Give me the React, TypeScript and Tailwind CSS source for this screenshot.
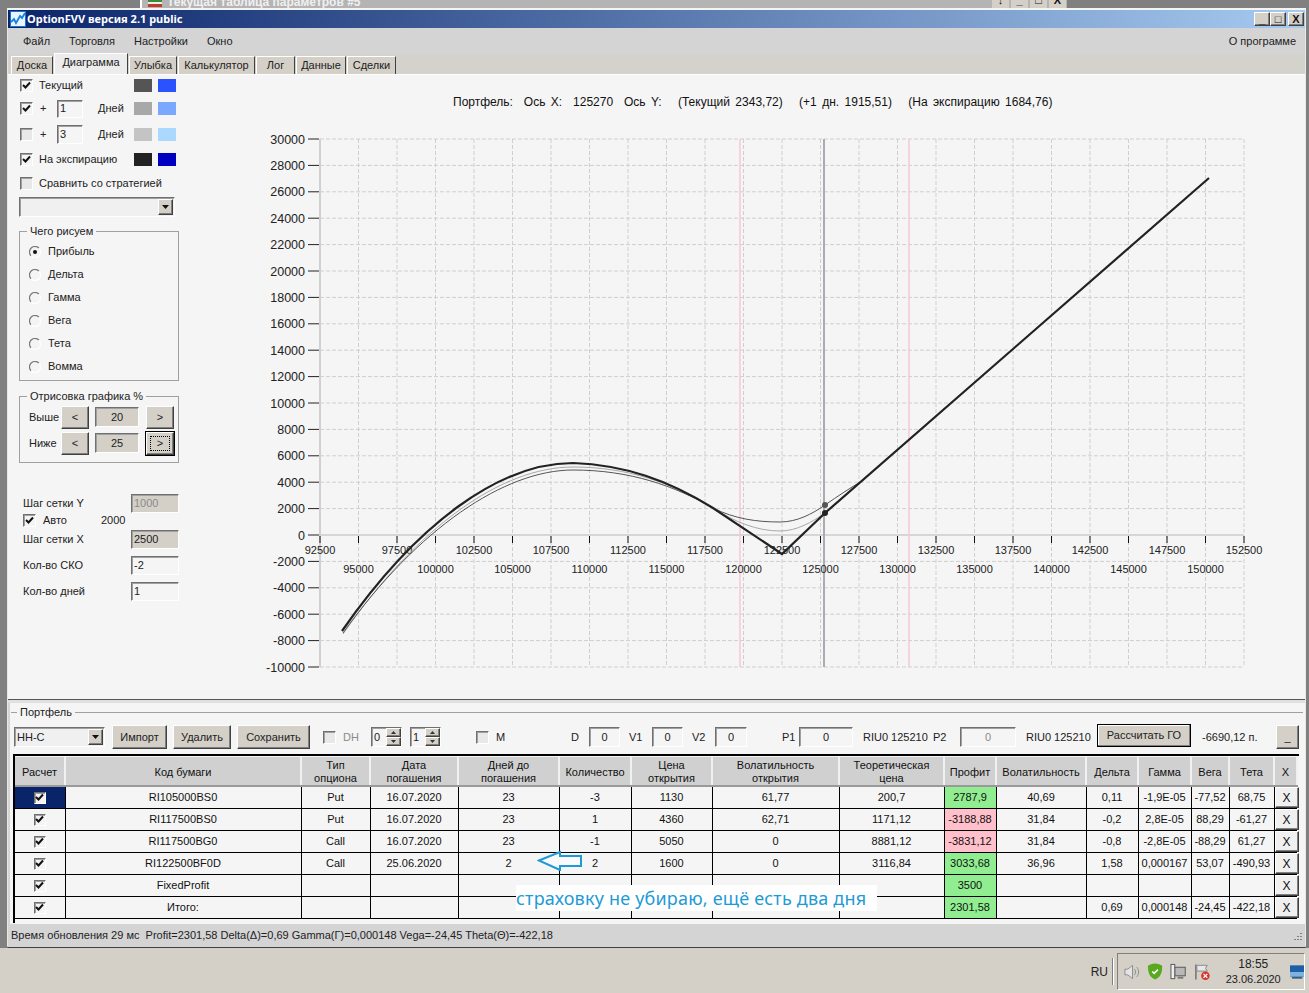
import React from "react";

const raised = "border border-t-white border-l-white border-r-[#404040] border-b-[#404040] bg-[#d4d0c8] shadow-[inset_-1px_-1px_0_#808080]";
const sunken = "border border-t-[#707070] border-l-[#707070] border-r-white border-b-white shadow-[inset_1px_1px_0_#a0a0a0]";

function Check({ on = true, size = 13, off = false }: { on?: boolean; size?: number; off?: boolean }) {
  return (
    <span className={`flex shrink-0 items-center justify-center ${sunken} ${off ? "bg-[#e8e8e8]" : "bg-[#f4f4f4]"}`} style={{ width: size, height: size }}>
      {on && (
        <svg width="9" height="9" viewBox="0 0 9 9">
          <path d="M1 4l2.5 2.5L8 1.5" fill="none" stroke="#111" strokeWidth="2" />
        </svg>
      )}
    </span>
  );
}

function Radio({ on = false }: { on?: boolean }) {
  return (
    <svg width="12" height="12" viewBox="0 0 12 12" className="shrink-0">
      <circle cx="6" cy="6" r="5.3" fill="#f4f4f4" />
      <path d="M10 2.2A5.3 5.3 0 0 0 2 9.8" fill="none" stroke="#777" strokeWidth="1.2" />
      <path d="M2 9.8A5.3 5.3 0 0 0 10 2.2" fill="none" stroke="#fff" strokeWidth="1.2" />
      {on && <circle cx="6" cy="6" r="2" fill="#111" />}
    </svg>
  );
}

function Field({ v, className = "" }: { v: string; className?: string }) {
  return <span className={`flex items-center ${sunken} ${className}`}>{v}</span>;
}

function Swatch({ c }: { c: string }) {
  return <span className={`h-[13px] w-[18px] shrink-0 ${c}`} />;
}

function Combo({ v = "", className = "" }: { v?: string; className?: string }) {
  return (
    <span className={`flex items-center justify-between bg-[#f0f0f0] pl-[2px] pr-[1px] ${sunken} ${className}`}>
      <span>{v}</span>
      <span className={`flex h-[16px] w-[15px] items-center justify-center ${raised}`}>
        <svg width="7" height="4" viewBox="0 0 7 4"><path d="M0 0h7L3.5 4z" fill="#111" /></svg>
      </span>
    </span>
  );
}

function Spin({ v }: { v: string }) {
  return (
    <span className={`flex h-[20px] w-[31px] items-center justify-between pl-[2px] ${sunken}`}>
      <span>{v}</span>
      <span className="flex h-full w-[15px] flex-col">
        <span className={`flex h-1/2 items-center justify-center ${raised}`}><svg width="5" height="3" viewBox="0 0 5 3"><path d="M0 3h5L2.5 0z" fill="#333" /></svg></span>
        <span className={`flex h-1/2 items-center justify-center ${raised}`}><svg width="5" height="3" viewBox="0 0 5 3"><path d="M0 0h5L2.5 3z" fill="#333" /></svg></span>
      </span>
    </span>
  );
}

function Chart() {
  const xs: number[] = [];
  for (let i = 0; i <= 24; i++) xs.push(320 + i * 38.5);
  const ys: number[] = [];
  for (let i = 0; i <= 20; i++) ys.push(139 + i * 26.4);
  const font = { fontFamily: "'Liberation Sans', Arial, sans-serif" };
  return (
    <svg width="1040" height="625" viewBox="262 75 1040 625" className="shrink-0" style={font}>
      <text x="453" y="106" fontSize="12" fill="#111" wordSpacing="2.1" xmlSpace="preserve">
        Портфель:  Ось X:  125270  Ось Y:   (Текущий 2343,72)   (+1 дн. 1915,51)   (На экспирацию 1684,76)
      </text>
      {xs.slice(1).map((x) => (
        <line key={x} x1={x} x2={x} y1="139" y2="667" stroke="#cfcfcf" strokeDasharray="4 2" />
      ))}
      {ys.map((y) => (
        <line key={y} x1="320" x2="1244" y1={y} y2={y} stroke="#cfcfcf" strokeDasharray="4 2" />
      ))}
      <line x1="320" x2="320" y1="139" y2="667" stroke="#d0d0d0" strokeWidth="2" />
      <line x1="320" x2="1244" y1="535" y2="535" stroke="#d6d6d6" strokeWidth="2" />
      <line x1="740" x2="740" y1="139" y2="667" stroke="#f5c6d2" strokeWidth="1.4" />
      <line x1="909" x2="909" y1="139" y2="667" stroke="#f5c6d2" strokeWidth="1.4" />
      <line x1="824" x2="824" y1="139" y2="667" stroke="#a9acb0" strokeWidth="2" />
      {ys.map((y, i) => (
        <g key={y}>
          <line x1="308" x2="319" y1={y} y2={y} stroke="#222" strokeWidth="1" />
          <text x="305" y={y + 4.5} fontSize="12.5" textAnchor="end" fill="#222">{30000 - i * 2000}</text>
        </g>
      ))}
      {xs.map((x) => (
        <line key={x} x1={x} x2={x} y1="536" y2="543" stroke="#111" />
      ))}
      {xs.map((x, i) => (
        <text key={x} x={x} y={i % 2 === 0 ? 554 : 573} fontSize="11" textAnchor="middle" fill="#222">{92500 + i * 2500}</text>
      ))}
      <path d="M343 634C418 526 502 467 573 467C628 467 672 483 713 508C735 522 757 531 780 531C797 531 812 522 825 513C838 503 850 491 862 481" fill="none" stroke="#a8a8a8" strokeWidth="1" />
      <path d="M343 633C418 528 505 470 573 470C630 470 675 486 713 508C735 519 757 522 780 522C797 522 812 514 825 505C838 496 850 488 862 481" fill="none" stroke="#555" strokeWidth="1" />
      <path d="M342 631C417 523 500 463 573 463C625 465 668 480 713 508L782 554L825 513L1209 178" fill="none" stroke="#222" strokeWidth="2.2" />
      <circle cx="825" cy="505" r="3" fill="#555" />
      <circle cx="825" cy="513" r="3" fill="#222" />
    </svg>
  );
}

const rows = [
  ["RI105000BS0", "Put", "16.07.2020", "23", "-3", "1130", "61,77", "200,7", "2787,9", "40,69", "0,11", "-1,9E-05", "-77,52", "68,75"],
  ["RI117500BS0", "Put", "16.07.2020", "23", "1", "4360", "62,71", "1171,12", "-3188,88", "31,84", "-0,2", "2,8E-05", "88,29", "-61,27"],
  ["RI117500BG0", "Call", "16.07.2020", "23", "-1", "5050", "0", "8881,12", "-3831,12", "31,84", "-0,8", "-2,8E-05", "-88,29", "61,27"],
  ["RI122500BF0D", "Call", "25.06.2020", "2", "2", "1600", "0", "3116,84", "3033,68", "36,96", "1,58", "0,000167", "53,07", "-490,93"],
  ["FixedProfit", "", "", "", "", "", "", "", "3500", "", "", "", "", ""],
  ["Итого:", "", "", "", "", "", "", "", "2301,58", "", "0,69", "0,000148", "-24,45", "-422,18"],
];
const widths = [50, 236, 69, 88, 101, 72, 81, 127, 105, 52, 90, 52, 53, 38, 45, 24];
const heads = ["Расчет", "Код бумаги", "Тип опциона", "Дата погашения", "Дней до погашения", "Количество", "Цена открытия", "Волатильность открытия", "Теоретическая цена", "Профит", "Волатильность", "Дельта", "Гамма", "Вега", "Тета", "X"];

function Table() {
  return (
    <div className="ml-[2px] mt-[5px] h-[169px] w-[1286px] border-l-2 border-t-2 border-black">
      <table className="mt-[1px] table-fixed border-collapse text-[11px] text-[#111]" style={{ width: 1282 }}>
        <colgroup>
          {widths.map((w, i) => <col key={i} style={{ width: i === 15 ? w - 1 : w }} />)}
        </colgroup>
        <thead>
          <tr className="h-[28px] bg-[#d0d0d0]">
            {heads.map((h) => (
              <th key={h} className="border-b-2 border-r-2 border-b-[#9a9a9a] border-r-[#f0f0f0] px-[2px] pt-[2px] text-center align-middle text-[11px] font-normal leading-[13px]">{h}</th>
            ))}
          </tr>
        </thead>
        <tbody>
          {rows.map((r, i) => (
            <tr key={i} className="h-[22px] bg-[#f5f5f5]">
              <td className={`border-b border-r border-black ${i === 0 ? "bg-[#0a246a]" : ""}`}>
                <span className="flex justify-center"><Check size={12} /></span>
              </td>
              {r.map((c, j) => (
                <td
                  key={j}
                  className={`overflow-hidden whitespace-nowrap border-b border-r border-black p-0 text-center ${j === 8 ? (c.startsWith("-") ? "bg-[#ffc0cb]" : "bg-[#90ee90]") : ""}`}
                >
                  {c}
                </td>
              ))}
              <td className="border-b border-black p-0">
                <span className={`flex h-[21px] w-[24px] items-center justify-center text-[12px] ${raised} bg-[#f0f0f0]`}>X</span>
              </td>
            </tr>
          ))}
        </tbody>
      </table>
    </div>
  );
}

function Group({ title, className, children }: { title: string; className: string; children: React.ReactNode }) {
  return (
    <fieldset className={`-ml-[1px] w-[160px] border border-[#a0a0a0] ${className}`}>
      <legend className="ml-[7px] px-[3px] leading-[13px]">{title}</legend>
      {children}
    </fieldset>
  );
}

function LeftPanel() {
  const radios = ["Прибыль", "Дельта", "Гамма", "Вега", "Тета", "Вомма"];
  return (
    <div className="flex w-[254px] shrink-0 flex-col pl-[12px] text-[11px] text-[#222]">
      <div className="flex h-[21px] items-center">
        <span className="-mt-[1px]"><Check /></span>
        <span className="ml-[6px] w-[95px]">Текущий</span>
        <Swatch c="bg-[#555555]" />
        <span className="w-[6px]" />
        <Swatch c="bg-[#2a52ff]" />
      </div>
      <div className="flex h-[25px] items-center">
        <Check />
        <span className="ml-[7px] w-[17px]">+</span>
        <Field v="1" className="h-[18px] w-[26px] pl-[2px]" />
        <span className="ml-[15px] w-[36px]">Дней</span>
        <Swatch c="bg-[#a8a8a8]" />
        <span className="w-[6px]" />
        <Swatch c="bg-[#7aa8ff]" />
      </div>
      <div className="flex h-[26px] items-center">
        <Check off on={false} />
        <span className="ml-[7px] w-[17px]">+</span>
        <Field v="3" className="h-[19px] w-[26px] pl-[2px]" />
        <span className="ml-[15px] w-[36px]">Дней</span>
        <Swatch c="bg-[#c4c4c4]" />
        <span className="w-[6px]" />
        <Swatch c="bg-[#aad8ff]" />
      </div>
      <div className="flex h-[24px] items-center">
        <Check />
        <span className="ml-[6px] w-[95px]">На экспирацию</span>
        <Swatch c="bg-[#222222]" />
        <span className="w-[6px]" />
        <Swatch c="bg-[#0000c0]" />
      </div>
      <div className="flex h-[24px] items-center">
        <Check on={false} off />
        <span className="ml-[6px]">Сравнить со стратегией</span>
      </div>
      <Combo className="-ml-[1px] mt-[2px] h-[20px] w-[156px]" />
      <Group title="Чего рисуем" className="mt-[8px] h-[156px]">
        <div className="flex flex-col pl-[9px] pt-[2px]">
          {radios.map((r, i) => (
            <div key={r} className="flex h-[23px] items-center gap-[7px]">
              <Radio on={i === 0} />
              <span>{r}</span>
            </div>
          ))}
        </div>
      </Group>
      <Group title="Отрисовка графика %" className="mt-[9px] h-[73px]">
        <div className="flex flex-col pl-[9px] pt-[1px]">
          {[["Выше", "20", false], ["Ниже", "25", true]].map(([l, v, focus]) => (
            <div key={l as string} className="flex h-[26px] items-center">
              <span className="w-[32px]">{l}</span>
              <span className={`flex h-[23px] w-[28px] items-center justify-center ${raised}`}>&lt;</span>
              <Field v={v as string} className="ml-[6px] h-[20px] w-[44px] justify-center bg-[#d4d0c8]" />
              <span className={`ml-[7px] flex h-[23px] w-[28px] items-center justify-center ${raised} ${focus ? "border-black outline outline-1 outline-black" : ""}`}>
                {focus ? <span className="flex h-[15px] w-[20px] items-center justify-center border border-dotted border-black">&gt;</span> : ">"}
              </span>
            </div>
          ))}
        </div>
      </Group>
      <div className="mt-[31px] flex w-[159px] flex-col pl-[3px]">
        <div className="flex h-[19px] items-center justify-between">
          <span>Шаг сетки Y</span>
          <Field v="1000" className="h-[19px] w-[48px] bg-[#d4d0c8] pl-[2px] text-[#8a8a8a]" />
        </div>
        <div className="flex h-[17px] items-center pb-[2px]">
          <Check />
          <span className="ml-[7px] w-[58px]">Авто</span>
          <span>2000</span>
        </div>
        <div className="flex h-[19px] items-center justify-between">
          <span>Шаг сетки X</span>
          <Field v="2500" className="h-[19px] w-[48px] bg-[#d4d0c8] pl-[2px]" />
        </div>
        <div className="mt-[7px] flex h-[19px] items-center justify-between">
          <span>Кол-во СКО</span>
          <Field v="-2" className="h-[19px] w-[48px] pl-[2px]" />
        </div>
        <div className="mt-[7px] flex h-[19px] items-center justify-between">
          <span>Кол-во дней</span>
          <Field v="1" className="h-[19px] w-[48px] pl-[2px]" />
        </div>
      </div>
    </div>
  );
}

function Toolbar() {
  const btn = `flex h-[24px] items-center justify-center ${raised}`;
  const f = `h-[20px] justify-center`;
  return (
    <div className="ml-[3px] mt-[6px] flex h-[24px] items-center text-[11px] text-[#222]">
      <Combo v="НН-С" className="h-[20px] w-[91px]" />
      <span className={`${btn} ml-[7px] w-[55px]`}>Импорт</span>
      <span className={`${btn} ml-[6px] w-[58px]`}>Удалить</span>
      <span className={`${btn} ml-[6px] w-[73px]`}>Сохранить</span>
      <span className="ml-[13px]"><Check on={false} off /></span>
      <span className="ml-[7px] w-[28px] text-[#8a8a8a]">DH</span>
      <Spin v="0" />
      <span className="ml-[8px]"><Spin v="1" /></span>
      <span className="ml-[35px]"><Check on={false} off /></span>
      <span className="ml-[7px] w-[75px]">M</span>
      <span className="w-[18px]">D</span>
      <Field v="0" className={`${f} w-[31px]`} />
      <span className="ml-[9px] w-[23px]">V1</span>
      <Field v="0" className={`${f} w-[31px]`} />
      <span className="ml-[9px] w-[23px]">V2</span>
      <Field v="0" className={`${f} w-[32px]`} />
      <span className="ml-[35px] w-[17px]">P1</span>
      <Field v="0" className={`${f} w-[54px]`} />
      <span className="ml-[10px] w-[70px]">RIU0 125210</span>
      <span className="w-[27px]">P2</span>
      <Field v="0" className={`${f} w-[56px] text-[#8a8a8a]`} />
      <span className="ml-[10px] w-[71px]">RIU0 125210</span>
      <span className={`mb-[3px] flex h-[23px] w-[94px] items-center justify-center border border-black bg-[#d4d0c8] shadow-[inset_-1px_-1px_0_#808080,inset_1px_1px_0_#fff]`}>Рассчитать ГО</span>
      <span className="ml-[11px] w-[74px]">-6690,12 п.</span>
      <span className={`${btn} w-[23px]`}>_</span>
    </div>
  );
}

function Tabs() {
  const tabs = [["Доска", 42], ["Диаграмма", 74], ["Улыбка", 48], ["Калькулятор", 77], ["Лог", 39], ["Данные", 50], ["Сделки", 49]] as [string, number][];
  return (
    <div className="flex h-[20px] items-end gap-[1px] bg-[#d4d2cc] pl-[3px] text-[11px] text-[#222]">
      {tabs.map(([t, w], i) => (
        <span
          key={t}
          style={{ width: w }}
          className={`flex items-center justify-center border-l border-r border-t border-l-white border-r-[#404040] border-t-white ${i === 1 ? "h-[21px] bg-[#ececec] pb-[3px]" : "h-[18px] bg-[#d4d0c8]"}`}
        >
          {t}
        </span>
      ))}
    </div>
  );
}

function Tray() {
  return (
    <div className="flex h-[43px] items-center justify-end bg-[#d4d0c8] pr-[4px] text-[11px] text-[#222]">
      <span className="text-[12px]">RU</span>
      <span className="ml-[4px] h-[27px] w-[2px] border-l border-r border-l-[#808080] border-r-white" />
      <div className="ml-[3px] flex h-[37px] w-[188px] items-center border border-b-white border-l-[#808080] border-r-white border-t-[#808080] pl-[6px]">
        <svg width="17" height="18" viewBox="0 0 17 18">
          <path d="M1 6h3l5-4v14l-5-4H1z" fill="#e4e4e4" stroke="#8a8a8a" />
          <path d="M11 6c1.5 2 1.5 4 0 6M13.5 4c2.500 3 2.500 7 0 10" fill="none" stroke="#8a8a8a" />
        </svg>
        <svg className="ml-[7px]" width="17" height="19" viewBox="0 0 17 19">
          <path d="M8.500 1c3 0 6 1 7.500 2.500 0 7-1.500 12-7.500 14.500C2.500 15.500 1 10.500 1 3.500 2.500 2 5.500 1 8.500 1z" fill="#58a820" />
          <path d="M5.500 9.500l2 2 4-4" fill="none" stroke="#fff" strokeWidth="1.600" />
        </svg>
        <svg className="ml-[7px]" width="17" height="18" viewBox="0 0 17 18">
          <rect x="5" y="4" width="11" height="9" fill="#b8b8b8" stroke="#555" />
          <rect x="8" y="14" width="6" height="2" fill="#777" />
          <rect x="1" y="1" width="4" height="15" fill="#eee" stroke="#555" />
        </svg>
        <svg className="ml-[7px]" width="17" height="18" viewBox="0 0 17 18">
          <path d="M2 1v16" stroke="#666" strokeWidth="1.400" />
          <path d="M3 2h11l-2 3 2 3H3z" fill="#e8e8e8" stroke="#888" />
          <circle cx="12" cy="13" r="4.500" fill="#d8332e" />
          <path d="M10 11l4 4M14 11l-4 4" stroke="#fff" strokeWidth="1.300" />
        </svg>
        <div className="ml-[16px] flex w-[56px] flex-col items-center leading-[15px]">
          <span className="text-[12px]">18:55</span>
          <span>23.06.2020</span>
        </div>
        <svg className="ml-[9px]" width="15" height="14" viewBox="0 0 15 14">
          <rect x="0" y="0" width="15" height="12" fill="#1f5fa8" />
          <rect x="0" y="7" width="15" height="5" fill="#7fb2dc" />
          <rect x="2" y="12" width="11" height="2" fill="#3a5a80" />
        </svg>
      </div>
    </div>
  );
}

export default function App() {
  return (
    <div className="relative flex h-[993px] w-[1309px] flex-col overflow-hidden bg-[#808080] font-['Liberation_Sans',Arial,sans-serif]">
      <div className="flex h-[8px] shrink-0 overflow-hidden">
        <div className="ml-[140px] flex h-[8px] w-[927px] items-end overflow-hidden border-l-2 border-white bg-[#b4b4b4] pl-[6px]">
          <svg width="14" height="8" viewBox="0 0 14 8" className="mb-[1px]"><rect width="14" height="3" fill="#3a8a3a" /><rect y="3" width="14" height="2" fill="#eee" /><rect y="5" width="14" height="3" fill="#c0392b" /></svg>
          <span className="ml-[5px] h-[8px] whitespace-nowrap text-[12px] font-bold leading-[4px] text-[#f0f0f0]">Текущая таблица параметров #5</span>
          <span className="ml-auto flex h-[8px] w-[75px] items-start gap-[2px]">
            {["↓", "_", "□", "X"].map((c) => <span key={c} className="h-[8px] w-[17px] bg-[#d4d0c8] text-center text-[11px] font-bold leading-[1px] text-[#111]">{c}</span>)}
          </span>
        </div>
      </div>
      <div className="ml-[7px] mr-[3px] flex h-[940px] shrink-0 flex-col border-b-2 border-l border-r border-t-2 border-b-[#404040] border-l-[#e8e8e4] border-r-[#e8e8e4] border-t-[#f4f4f0] bg-[#d4d4d4]">
        <div className="flex h-[18px] shrink-0 items-center justify-between bg-[linear-gradient(to_right,#0a246a,#a6caf0)] pl-[2px] pr-[1px]">
          <div className="flex items-center gap-[1px]">
            <svg width="16" height="16" viewBox="0 0 16 16">
              <rect width="16" height="16" fill="#1a6fd0" />
              <rect x="1" y="1" width="14" height="14" fill="#e8f4ff" />
              <path d="M1 11l3-3 2 4 4-7 2 2 3-5" fill="none" stroke="#1a7fe0" strokeWidth="1.800" />
            </svg>
            <span className="font-['Noto_Sans',sans-serif] text-[11px] font-bold text-white">OptionFVV версия 2.1 public</span>
          </div>
          <div className="flex items-center">
            {["_", "□", "X"].map((c, i) => (
              <span key={c} className={`flex h-[14px] w-[16px] items-center justify-center text-[11px] font-bold leading-none text-[#111] ${raised} ${i === 2 ? "ml-[2px]" : ""}`}>{c}</span>
            ))}
          </div>
        </div>
        <div className="flex h-[26px] shrink-0 items-center justify-between pl-[15px] pr-[9px] text-[11px] text-[#222]">
          <div className="flex gap-[19px]">
            <span>Файл</span><span>Торговля</span><span>Настройки</span><span>Окно</span>
          </div>
          <span>О программе</span>
        </div>
        <Tabs />
        <div className="flex h-[626px] shrink-0 border-b border-t border-b-[#555] border-t-white bg-[#f5f5f5]">
          <LeftPanel />
          <Chart />
        </div>
        <div className="flex h-[3px] shrink-0 bg-[#e0e0e0]" />
        <div className="relative ml-[2px] flex h-[221px] shrink-0 flex-col bg-[#f5f5f5] pl-[1px] pt-[3px]">
          <fieldset className="h-[218px] w-[1292px] border-t border-[#a0a0a0]">
            <legend className="ml-[6px] px-[3px] text-[11px] leading-[13px] text-[#222]">Портфель</legend>
            <Toolbar />
            <Table />
          </fieldset>
        </div>
        <div className="flex h-[23px] shrink-0 items-center justify-between bg-[#d4d4d4] pl-[3px] pr-[2px] text-[11px] text-[#222]">
          <span className="whitespace-pre">Время обновления 29 мс  Profit=2301,58 Delta(Δ)=0,69 Gamma(Γ)=0,000148 Vega=-24,45 Theta(Θ)=-422,18</span>
          <svg width="10" height="10" viewBox="0 0 10 10"><path d="M8 2v1M5 5v1M8 5v1M2 8v1M5 8v1M8 8v1" stroke="#808080" strokeWidth="2" /></svg>
        </div>
      </div>
      <div className="h-[2px] shrink-0 bg-[#d4d0c8]" />
      <Tray />
      <svg className="absolute left-[537px] top-[850px]" width="46" height="21" viewBox="0 0 46 21">
        <path d="M2 10.500L23 2v4h21v10H23v4z" fill="#fafafa" stroke="#1e9ad6" strokeWidth="2" />
      </svg>
      <div className="absolute left-[516px] top-[885px] flex h-[26px] w-[361px] items-center bg-white font-['Noto_Sans',sans-serif] text-[18px] tracking-[0.2px] text-[#1e9ad6]">
        страховку не убираю, ещё есть два дня
      </div>
    </div>
  );
}
